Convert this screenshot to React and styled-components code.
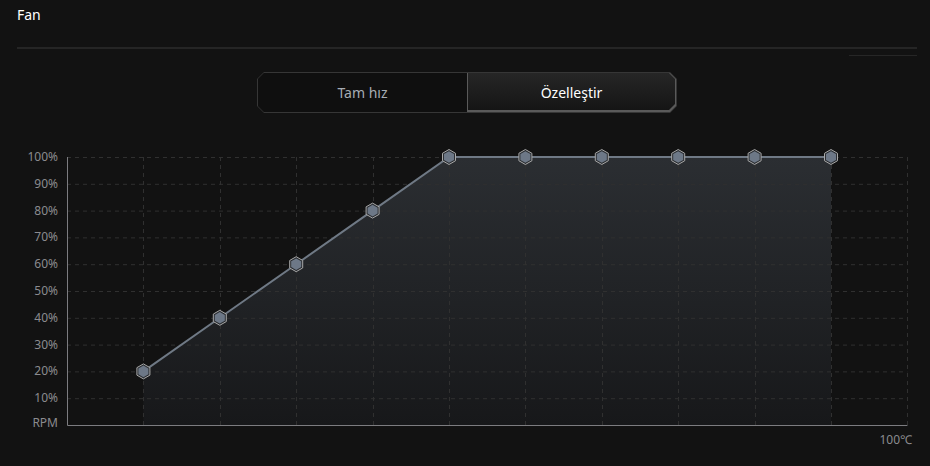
import React from "react";
import styled, { createGlobalStyle } from "styled-components";

const GlobalStyle = createGlobalStyle`
    html, body {
        margin: 0;
        padding: 0;
        background: #121212;
    }
    body {
        font-family: "Noto Sans", "Open Sans", "Liberation Sans", sans-serif;
        color: #f2f2f2;
    }
`;

// chart geometry, in svg units (svg starts at the content's left edge)
const AXIS_X = 50;
const TOP_Y = 17;
const BOTTOM_Y = 285;
const COL = 76.4;
const ROW = (BOTTOM_Y - TOP_Y) / 10;
const COLUMNS = 11;

const points = [20, 40, 60, 80, 100, 100, 100, 100, 100, 100];

const px = (i) => AXIS_X + COL * (i + 1);
const py = (v) => BOTTOM_Y - (v / 10) * ROW;

const hexagon = (cx, cy, r) => {
    const pts = [];
    for (let k = 0; k < 6; k++) {
        const a = (Math.PI / 3) * k - Math.PI / 2;
        pts.push(`${(cx + r * Math.cos(a)).toFixed(2)},${(cy + r * Math.sin(a)).toFixed(2)}`);
    }
    return pts.join(" ");
};

function FanCurve() {
    const line = points.map((v, i) => `${px(i)},${py(v)}`).join(" ");
    const area = `${px(0)},${BOTTOM_Y} ${line} ${px(points.length - 1)},${BOTTOM_Y}`;
    const right = AXIS_X + COL * COLUMNS;

    return (
        <Chart width="900" height="326" viewBox="0 0 900 326">
            <defs>
                <linearGradient id="curveFill" x1="0" y1="0" x2="0" y2="1">
                    <stop offset="0" stopColor="#2b2e32" />
                    <stop offset="1" stopColor="#17181a" />
                </linearGradient>
            </defs>

            <polygon points={area} fill="url(#curveFill)" />

            {Array.from({ length: 10 }, (_, i) => (
                <line
                    key={`h${i}`}
                    x1={AXIS_X}
                    x2={right}
                    y1={TOP_Y + ROW * i + 0.5}
                    y2={TOP_Y + ROW * i + 0.5}
                    stroke="#303030"
                    strokeDasharray="4 4"
                />
            ))}
            {Array.from({ length: COLUMNS }, (_, i) => (
                <line
                    key={`v${i}`}
                    x1={Math.round(px(i)) + 0.5}
                    x2={Math.round(px(i)) + 0.5}
                    y1={TOP_Y}
                    y2={BOTTOM_Y}
                    stroke="#303030"
                    strokeDasharray="4 4"
                />
            ))}

            <polyline
                points={`${AXIS_X + 0.5},${TOP_Y} ${AXIS_X + 0.5},${BOTTOM_Y + 0.5} ${right},${BOTTOM_Y + 0.5}`}
                fill="none"
                stroke="#7c7c80"
            />

            {[100, 90, 80, 70, 60, 50, 40, 30, 20, 10].map((v) => (
                <AxisLabel key={v} x={AXIS_X - 9} y={py(v) + 4} textAnchor="end">
                    {v}%
                </AxisLabel>
            ))}
            <AxisLabel x={AXIS_X - 9} y={BOTTOM_Y + 2} textAnchor="end">
                RPM
            </AxisLabel>
            <AxisLabel x={895} y={304} textAnchor="end">
                100℃
            </AxisLabel>

            <polyline points={line} fill="none" stroke="#6f7985" strokeWidth="2" />

            {points.map((v, i) => (
                <g key={i}>
                    <polygon points={hexagon(px(i), py(v), 7.5)} fill="#2a2d31" stroke="#a8a8a8" strokeWidth="1" />
                    <polygon points={hexagon(px(i), py(v), 5.8)} fill="#6d7887" />
                </g>
            ))}
        </Chart>
    );
}

export default function App() {
    const [mode, setMode] = React.useState("custom");
    return (
        <Page>
            <GlobalStyle />
            <Title>Fan</Title>
            <Divider />
            <SubDivider />
            <TabRow>
                <TabGroup>
                    <Tab side="left" active={mode === "full"} onClick={() => setMode("full")}>
                        <span>Tam hız</span>
                    </Tab>
                    <Tab side="right" active={mode === "custom"} onClick={() => setMode("custom")}>
                        <span>Özelleştir</span>
                    </Tab>
                </TabGroup>
            </TabRow>
            <FanCurve />
        </Page>
    );
}

const Page = styled.div`
    width: 900px;
    height: 466px;
    padding: 4px 13px 0 17px;
    display: flex;
    flex-direction: column;
    overflow: hidden;
`;

const Title = styled.h1`
    margin: 0;
    font-size: 14px;
    font-weight: 400;
    line-height: 22px;
    color: #ffffff;
`;

const Divider = styled.div`
    margin-top: 21px;
    height: 2px;
    background: #252525;
`;

const SubDivider = styled.div`
    align-self: flex-end;
    width: 68px;
    height: 1px;
    margin-top: 6px;
    background: #262626;
`;

const TabRow = styled.div`
    display: flex;
    justify-content: center;
    margin-top: 16px;
`;

const TabGroup = styled.div`
    display: flex;
    width: 420px;
    height: 41px;
    box-sizing: border-box;
    padding: 1px;
    background: #363636;
    clip-path: polygon(7px 0, calc(100% - 7px) 0, 100% 7px, 100% calc(100% - 7px), calc(100% - 7px) 100%, 7px 100%, 0 calc(100% - 7px), 0 7px);
`;

const cut = (side, c) =>
    side === "left"
        ? `polygon(${c}px 0, 100% 0, 100% 100%, ${c}px 100%, 0 calc(100% - ${c}px), 0 ${c}px)`
        : `polygon(0 0, calc(100% - ${c}px) 0, 100% ${c}px, 100% calc(100% - ${c}px), calc(100% - ${c}px) 100%, 0 100%)`;

// the button face is the border colour, the ::before layer is the fill inset by the border
const Tab = styled.button`
    position: relative;
    flex: 1;
    border: none;
    margin: 0;
    padding: 0;
    font-family: inherit;
    font-size: 14px;
    cursor: pointer;
    clip-path: ${(p) => cut(p.side, 6)};
    color: ${(p) => (p.active ? "#ffffff" : "#a6acb4")};
    background: ${(p) => (p.active ? "#5a5a5a" : "#0f0f0f")};

    &::before {
        content: "";
        position: absolute;
        inset: ${(p) => (p.active ? "0 1px 2px 1px" : "0")};
        clip-path: ${(p) => cut(p.side, 6)};
        background: ${(p) => (p.active ? "linear-gradient(180deg, #262626 0%, #151515 100%)" : "#0f0f0f")};
    }

    span {
        position: relative;
    }
`;

const Chart = styled.svg`
    display: block;
    margin-top: 27px;
    flex-shrink: 0;
`;

const AxisLabel = styled.text`
    font-family: "Noto Sans", "Open Sans", "Liberation Sans", sans-serif;
    font-size: 12px;
    fill: #8b8b8f;
`;
